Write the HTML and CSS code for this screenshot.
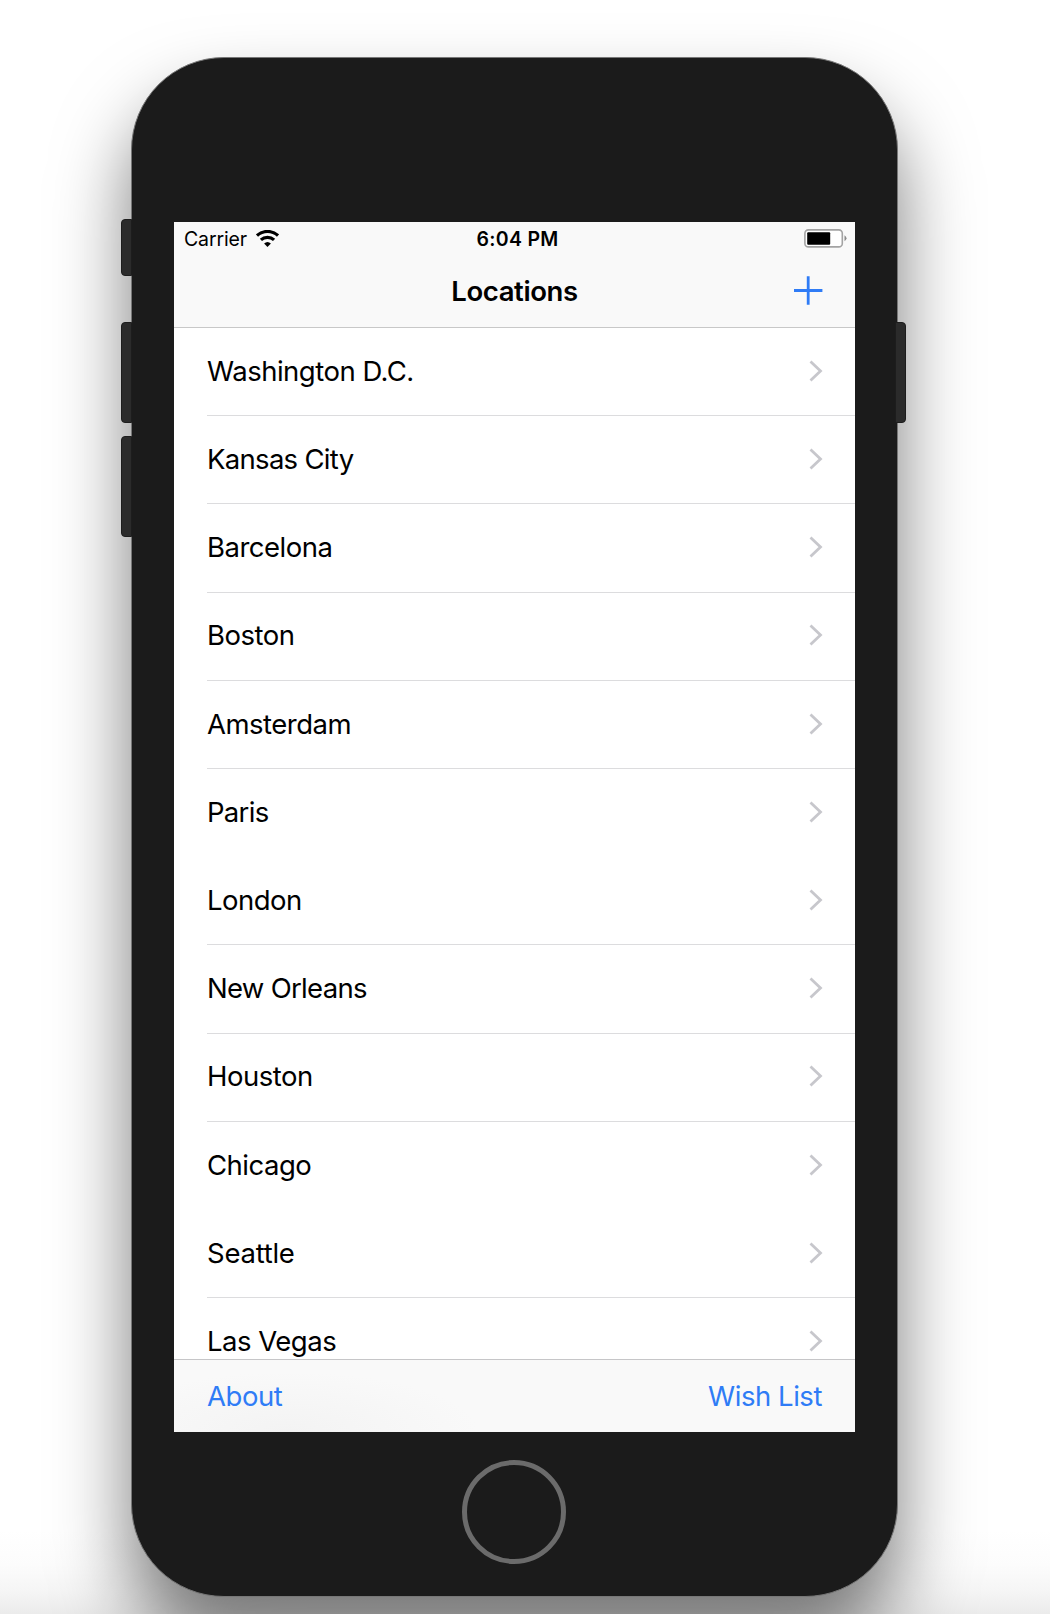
FILE: index.html
```html
<!DOCTYPE html>
<html lang="en">
<head>
<meta charset="utf-8">
<title>Locations</title>
<link rel="stylesheet" href="styles.css">
</head>
<body>
<svg width="0" height="0" class="defs"><symbol id="chevron" viewBox="0 0 14 22"><path d="M1.500 1.500l10 9.500-10 9.500" fill="none" stroke="#c7c7cc" stroke-width="2.800"/></symbol></svg>
<main class="phone">
  <span class="key mute"></span><span class="key up"></span><span class="key down"></span><span class="key power"></span>
  <div class="screen">
    <header class="top">
      <div class="status">
        <div class="carrier"><span class="carrier-name">Carrier</span>
          <svg class="wifi" width="23" height="17" viewBox="0 0 23 17"><g fill="none" stroke="#000" stroke-width="3.200"><path d="M1 5.500a15.600 15.600 0 0 1 21 0"/><path d="M4.900 9.900a9.700 9.700 0 0 1 13.200 0"/></g><path d="M11.500 17l-3.400-3.500q3.400-3 6.800 0z"/></svg>
        </div>
        <time class="clock">6:04 PM</time>
        <svg class="battery" width="44" height="19" viewBox="0 0 44 19"><rect x=".9" y=".9" width="37.400" height="17" rx="3.500" fill="#fff" stroke="#a3a3a3" stroke-width="1.600"/><rect x="3.200" y="3.200" width="23" height="12.600" rx="1"/><path d="M40.500 6.300q4 3 0 6z" fill="#8a8a8a"/></svg>
      </div>
      <div class="navbar">
        <h1 class="title">Locations</h1>
        <svg class="add" width="29" height="29" viewBox="0 0 29 29"><path d="M0 14.500h28.400M14.200 .3v28.400" stroke="#2f7cf6" stroke-width="2.800"/></svg>
      </div>
    </header>
    <ul class="list">
      <li class="row"><span class="name">Washington D.C.</span><svg class="chev"><use href="#chevron"/></svg></li>
      <li class="row"><span class="name tight">Kansas City</span><svg class="chev"><use href="#chevron"/></svg></li>
      <li class="row"><span class="name">Barcelona</span><svg class="chev"><use href="#chevron"/></svg></li>
      <li class="row"><span class="name">Boston</span><svg class="chev"><use href="#chevron"/></svg></li>
      <li class="row"><span class="name">Amsterdam</span><svg class="chev"><use href="#chevron"/></svg></li>
      <li class="row plain"><span class="name tight">Paris</span><svg class="chev"><use href="#chevron"/></svg></li>
      <li class="row"><span class="name">London</span><svg class="chev"><use href="#chevron"/></svg></li>
      <li class="row"><span class="name tight">New Orleans</span><svg class="chev"><use href="#chevron"/></svg></li>
      <li class="row"><span class="name">Houston</span><svg class="chev"><use href="#chevron"/></svg></li>
      <li class="row plain"><span class="name">Chicago</span><svg class="chev"><use href="#chevron"/></svg></li>
      <li class="row"><span class="name loose">Seattle</span><svg class="chev"><use href="#chevron"/></svg></li>
      <li class="row"><span class="name">Las Vegas</span><svg class="chev"><use href="#chevron"/></svg></li>
    </ul>
    <footer class="toolbar"><a class="link">About</a><a class="link">Wish List</a></footer>
  </div>
  <div class="home"></div>
</main>
</body>
</html>
```
FILE: styles.css
```css
* { box-sizing: border-box; }
body { margin: 0; height: 1614px; padding: 57px 0 0 131px; overflow: hidden; font-family: Inter, "Liberation Sans", sans-serif; color: #000; background: linear-gradient(to bottom, #fff 1530px, #fcfcfc 1565px, #f5f5f5 1592px, #ebebeb 1614px); }
.defs { position: absolute; }
.phone { position: relative; width: 767px; height: 1540px; padding: 164px 42px 0 42px; border-radius: 93px; background: #1b1b1b; border: 1px solid #777; box-shadow: 0 46px 76px rgba(0,0,0,.52); }
.key { position: absolute; width: 11px; height: 101px; background: #2b2b2b; border: 1px solid #1d1d1d; border-radius: 4px 0 0 4px; left: -11px; }
.mute { top: 161px; height: 57px; }
.up { top: 264px; }
.down { top: 378px; }
.power { left: auto; right: -9px; top: 264px; border-radius: 0 4px 4px 0; }
.screen { width: 681px; height: 1210px; background: #fff; display: flex; flex-direction: column; overflow: hidden; }
.top { flex: none; height: 106px; background: #f9f9f9; border-bottom: 1px solid #c8c8c8; }
.status { height: 33px; display: grid; grid-template-columns: 1fr auto 1fr; align-items: center; padding: 0 7px 0 10px; }
.carrier { display: flex; align-items: center; gap: 9px; }
.carrier-name { font-size: 19.500px; letter-spacing: -.15px; padding-top: 1px; }
.clock { font-size: 19.500px; font-weight: 600; letter-spacing: .3px; padding: 1px 0 0 3px; }
.battery { justify-self: end; }
.navbar { height: 71px; display: grid; grid-template-columns: 1fr auto 1fr; align-items: center; padding: 0 32px; }
.title { grid-column: 2; margin: 0; font-size: 27.500px; line-height: 34px; font-weight: 600; letter-spacing: -.4px; }
.add { justify-self: end; margin-top: -1px; }
.list { flex: 1; min-height: 0; overflow: hidden; list-style: none; margin: 0; padding: 0 0 0 33px; }
.row { height: 88.200px; display: flex; align-items: center; justify-content: space-between; padding: 0 32.500px 1.500px 0; border-bottom: 1px solid #dcdcde; }
.plain { border-bottom-color: transparent; }
.name { font-size: 27.500px; line-height: 34px; letter-spacing: -.5px; }
.tight { letter-spacing: -.7px; }
.loose { letter-spacing: -.25px; }
.chev { width: 14px; height: 22px; }
.toolbar { flex: none; height: 73px; display: flex; justify-content: space-between; align-items: center; padding: 0 33px; border-top: 1px solid #c6c6c8; background: radial-gradient(ellipse 190px 60px at 115px 100%, #f3f3f3, #f9f9f9); }
.link { color: #2f7cf6; font-size: 27.500px; letter-spacing: -.45px; }
.home { width: 104px; height: 104px; border: 5px solid #6b6b6b; border-radius: 50%; margin: 28px auto 0 288px; }
```
